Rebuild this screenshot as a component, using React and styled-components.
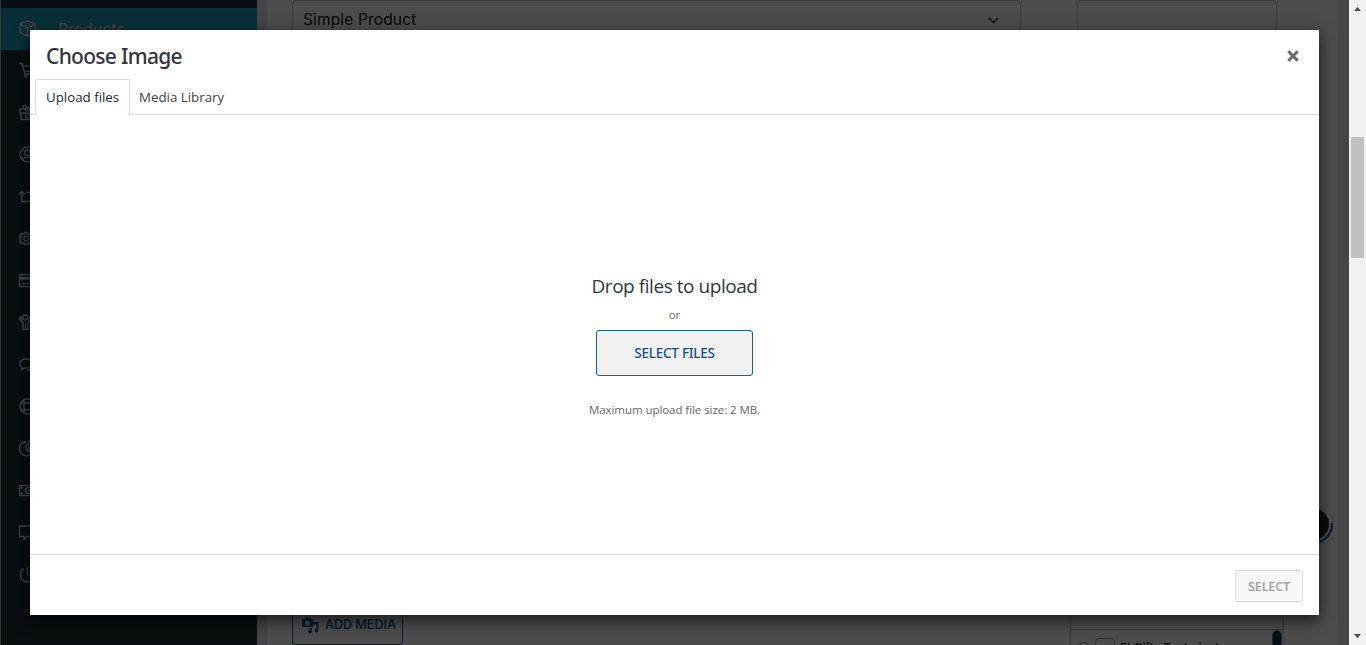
import React from "react";
import styled, { createGlobalStyle } from "styled-components";

const Global = createGlobalStyle`
  *, *::before, *::after { box-sizing: border-box; }
  html, body { margin: 0; padding: 0; overflow: hidden; }
  button { font: inherit; margin: 0; }
`;

const Screen = styled.div`
  display: flex;
  width: 1366px;
  height: 645px;
  overflow: hidden;
  font-family: "Open Sans", "Noto Sans", sans-serif;
`;
const Viewport = styled.div`
  position: relative;
  display: flex;
  width: 1349px;
  height: 645px;
  overflow: hidden;
  background: #e4e7ed;
`;

const Sidebar = styled.nav`
  width: 257px;
  height: 645px;
  padding-top: 8px;
  background: #1b2f39;
  border-left: 1px solid #b4b4b4;
`;
const NavItem = styled.div`
  display: flex;
  align-items: center;
  gap: 22px;
  height: 42px;
  padding-left: 18px;
  background: ${(p) => (p.$active ? "#1b9db7" : "transparent")};
  color: #e4e4e4;
  font: 400 16px/1 Inter, sans-serif;
  svg { width: 17px; height: 17px; flex: none; margin-bottom: 2px; }
`;
const NavLabel = styled.span`
  letter-spacing: -0.1px;
`;

const Content = styled.main`
  display: flex;
  flex-direction: column;
  justify-content: space-between;
  width: 1071px;
  height: 645px;
  margin-left: 10px;
  background: #fff;
`;
const FieldRow = styled.div`
  display: flex;
  gap: 56px;
  padding-left: 25px;
`;
const Field = styled.div`
  display: flex;
  align-items: center;
  justify-content: space-between;
  width: ${(p) => p.$width}px;
  height: 40px;
  padding: 0 21px 0 10px;
  border: 1px solid #c8c8c8;
  border-radius: 4px;
  color: #111;
  font: 400 15.5px/1 Inter, sans-serif;
  letter-spacing: 0.15px;
`;
const BottomRow = styled.div`
  display: flex;
  align-items: flex-end;
  justify-content: space-between;
  padding: 0 54px 0 25px;
`;
const MediaButton = styled.div`
  display: flex;
  align-items: center;
  gap: 6px;
  width: 111px;
  height: 40px;
  padding-left: 9px;
  border: 1px solid #1b65a0;
  border-radius: 3px;
  color: #1b65a0;
  font: 600 12.5px/1 Inter, sans-serif;
  white-space: nowrap;
`;
const CategoryBox = styled.div`
  width: 214px;
  height: 45px;
  border: solid #c0c0c0;
  border-width: 0 1px;
  padding-top: 29px;
`;
const CategoryRow = styled.div`
  display: flex;
  align-items: flex-start;
  height: 16px;
  padding: 0 1px 0 6px;
  overflow: hidden;
  border-top: 1px solid #c0c0c0;
  font: 500 12px/1 Inter, sans-serif;
  color: #222;
`;
const Expand = styled.span`
  width: 13px;
  height: 13px;
  margin: 12px 5px 0 0;
  border: 1px solid #1b9db7;
  border-radius: 50%;
`;
const Box = styled.span`
  width: 20px;
  height: 20px;
  margin: 8px 5px 0 0;
  border: 1px solid #aaa;
  border-radius: 4px;
`;
const CategoryName = styled.span`
  margin-top: 12px;
  white-space: nowrap;
`;
const Thumb = styled.span`
  width: 10px;
  height: 18px;
  margin-left: auto;
  background: #1b2f39;
  border: 1px solid #1b9db7;
  border-radius: 5px;
`;
const Bubble = styled.svg`
  position: absolute;
  left: 1294px;
  top: 504px;
  width: 42px;
  height: 42px;
`;

const Backdrop = styled.div`
  position: absolute;
  inset: 0;
  padding: 30px;
  background: rgba(0, 0, 0, 0.7);
`;
const Modal = styled.section`
  display: flex;
  flex-direction: column;
  width: 1289px;
  height: 585px;
  background: #fff;
  box-shadow: 0 5px 15px rgba(0, 0, 0, 0.7);
`;
const Header = styled.header`
  display: flex;
  align-items: center;
  justify-content: space-between;
  height: 49px;
  padding: 0 20px 0 16px;
  svg { margin-top: 3px; }
`;
const Title = styled.h1`
  margin: 3px 0 0;
  color: #32373c;
  font: 500 21px/30px "Noto Sans", sans-serif;
  letter-spacing: -0.7px;
`;
const Tabs = styled.div`
  display: flex;
  height: 36px;
  padding-left: 5px;
  border-bottom: 1px solid #ddd;
`;
const Tab = styled.div`
  width: ${(p) => p.$width}px;
  height: 36px;
  padding: 8px 0 0 ${(p) => (p.$active ? 10 : 9)}px;
  border: ${(p) => (p.$active ? "1px solid #ddd" : "1px solid transparent")};
  border-width: ${(p) => (p.$active ? "1px" : "1px 0 0")};
  border-bottom-color: ${(p) => (p.$active ? "#fff" : "transparent")};
  color: ${(p) => (p.$active ? "#23282d" : "#444")};
  font-size: 13.3px;
  line-height: 18px;
  white-space: nowrap;
`;
const DropArea = styled.div`
  display: flex;
  flex-direction: column;
  align-items: center;
  flex: 1;
  padding-top: 157px;
`;
const DropTitle = styled.h2`
  margin: 0;
  color: #32373c;
  font: 400 19px/28px "Open Sans", sans-serif;
  letter-spacing: -0.45px;
`;
const Small = styled.p`
  margin: ${(p) => p.$top}px 0 0;
  color: #666;
  font-size: 11.5px;
  line-height: 18px;
  letter-spacing: ${(p) => p.$track || 0}px;
`;
const Button = styled.button`
  width: ${(p) => (p.$large ? 157 : 68)}px;
  height: ${(p) => (p.$large ? 46 : 32)}px;
  margin-top: ${(p) => (p.$large ? 6 : 0)}px;
  padding: ${(p) => (p.$large ? 0 : "1px 0 0")};
  border: 1px solid ${(p) => (p.$large ? "#16609b" : "#ddd")};
  border-radius: 3px;
  background: ${(p) => (p.$large ? "#f1f1f1" : "#f7f7f7")};
  color: ${(p) => (p.$large ? "#16507f" : "#a0a5aa")};
  font: ${(p) => (p.$large ? "500 13.5px" : "600 12.5px")}/18px "Noto Sans", sans-serif;
  letter-spacing: ${(p) => p.$track}px;
`;
const Footer = styled.footer`
  display: flex;
  align-items: center;
  justify-content: flex-end;
  height: 61px;
  padding: 2px 16px 0 0;
  border-top: 1px solid #ddd;
`;

const Scrollbar = styled.div`
  display: flex;
  flex-direction: column;
  align-items: center;
  width: 17px;
  height: 645px;
  padding: 7px 0;
  background: #f1f1f1;
`;
const Handle = styled.div`
  width: 13px;
  height: 121px;
  margin: 126px 0 auto;
  background: #c1c1c1;
`;

const Line = ({ children }) => (
  <svg viewBox="0 0 17 17" fill="none" stroke="currentColor" strokeWidth="1.3">{children}</svg>
);

const icons = [
  <path key="i" d="M8.5 1 L16 4 V12.5 L8.5 16 L1 12.5 V4 Z M1 4 L8.5 7.5 L16 4 M8.5 7.5 V16" />,
  <path key="i" d="M0 1.5 H3 L6 12 H15 M4 4 H16 L14 9.5 H5.5 M8 14 a1 1 0 1 1-2 0 a1 1 0 1 1 2 0 M15 14 a1 1 0 1 1-2 0 a1 1 0 1 1 2 0" />,
  <path key="i" d="M1 5 H16 V9 H1 Z M2 9 V15.5 H15 V9 M7 5 V15.5 M10 5 V15.5 M8.5 5 C4 5 3 2 5 1.5 C7 1 8.5 5 8.5 5 C8.5 5 10 1 12 1.5 C14 2 13 5 8.5 5" />,
  <g key="i"><circle cx="8.5" cy="8.5" r="7.5" /><circle cx="8.5" cy="6.8" r="2.8" /><path d="M3.5 13.5 C5 10.5 12 10.5 13.5 13.5" /></g>,
  <path key="i" d="M0 6.5 L3 3.5 L6 6.5 M3 4 V13.5 H13 M7 4.5 H14 V13 M11 10.5 L14 13.5 L17 10.5" />,
  <g key="i"><circle cx="7" cy="8.5" r="2.3" /><path d="M5.5 2.5 H8.5 L9.1 4.4 L11.5 3.5 L13.3 6 L12 8.5 L13.3 11 L11.5 13.5 L9.1 12.6 L8.5 14.5 H5.5 L4.9 12.6 L2.5 13.5 L.7 11 L2 8.5 L.7 6 L2.5 3.5 L4.9 4.4 Z" /></g>,
  <path key="i" d="M.5 2.5 H16.5 V14.5 H.5 Z M.5 5.5 H16.5 M.5 7 H16.5 M3 11.5 H6 M7 11.5 H10" />,
  <g key="i"><circle cx="6.5" cy="3.5" r="2.5" /><path d="M4 6 L1.5 3 L.5 5 L4 8.5 V15.5 H9 V8.5 L12.5 5 L11.5 3 L9 6 M6.5 10 V15" /></g>,
  <path key="i" d="M3.5 12 C-1 9 .5 3 7 3 C14 3 15.5 9 11 11.5 C9 12.5 7 12.2 6 12 L2 14 Z M14.5 6 C18 8 17 12 15 13 L16 15 L12 14 L8 14" />,
  <g key="i"><circle cx="8.5" cy="8.5" r="7.5" /><circle cx="8.5" cy="8.5" r="3.7" /><path d="M2.5 4 L5.5 6.5 M4 2.5 L6.5 5.5 M13 2.5 L10.5 5.5 M14.5 4 L11.5 6.5 M2.5 13 L5.5 10.5 M4 14.5 L6.5 11.5 M13 14.5 L10.5 11.5 M14.5 13 L11.5 10.5" /></g>,
  <path key="i" d="M7 1.5 A7.2 7.2 0 1 0 12.5 14 L7 9 Z M9.5 1 V8 H16 A7 7 0 0 0 9.5 1 M10 10 L14 13.5 A7 7 0 0 0 16 10 Z" />,
  <g key="i"><path d="M.5 3.5 H18 V13.5 H.5 Z M2.5 7 V5.5 H4 M2.5 10 V11.5 H4" /><circle cx="9.5" cy="8.5" r="3.2" /><path d="M9.5 6.5 V10.5" /></g>,
  <path key="i" d="M.5 2 H17 V12.5 H8 L5 15.5 V12.5 H.5 Z" />,
  <path key="i" d="M5 2.5 A7.2 7.2 0 1 0 12 2.5 M8.5 1 V9" />,
];

export default function App() {
  return (
    <Screen>
      <Global />
      <Viewport>
        <Sidebar>
          {icons.map((icon, i) => (
            <NavItem key={i} $active={i === 0}>
              <Line>{icon}</Line>
              {i === 0 && <NavLabel>Products</NavLabel>}
            </NavItem>
          ))}
        </Sidebar>
        <Content>
          <FieldRow>
            <Field $width={729}>
              Simple Product
              <svg width="11" height="7" viewBox="0 0 11 7" fill="none" stroke="#111" strokeWidth="1.3"><path d="M1 1 L5.5 5.5 L10 1" /></svg>
            </Field>
            <Field $width={200} />
          </FieldRow>
          <BottomRow>
            <MediaButton>
              <svg width="17" height="17" viewBox="0 0 17 17" fill="currentColor">
                <path fillRule="evenodd" d="M0 2 H2.5 L4 0.5 H7 L8.5 2 H11 V10 H0 Z M5.5 3.5 a2.5 2.5 0 1 0 .01 0 Z" />
                <path d="M11 5 H16.5 V13 A2 2 0 1 1 14.5 11.5 V7.5 H11 Z M7.5 11 H10 V14.5 A2 2 0 1 1 7.5 12.7 Z" />
              </svg>
              ADD MEDIA
            </MediaButton>
            <CategoryBox>
              <CategoryRow>
                <Expand /><Box /><CategoryName>El Gifts Technical</CategoryName><Thumb />
              </CategoryRow>
            </CategoryBox>
          </BottomRow>
        </Content>
        <Bubble viewBox="0 0 42 42">
          <circle cx="19" cy="20" r="16" fill="#222" />
          <path d="M38 19 A19 19 0 0 1 19 39" fill="none" stroke="#1b50b0" strokeWidth="2" />
        </Bubble>
        <Backdrop>
          <Modal>
            <Header>
              <Title>Choose Image</Title>
              <svg width="12" height="12" viewBox="0 0 12 12" stroke="#666c72" strokeWidth="3"><path d="M1.3 1.3 L10.7 10.7 M10.7 1.3 L1.3 10.7" /></svg>
            </Header>
            <Tabs>
              <Tab $active $width={95}>Upload files</Tab>
              <Tab $width={105}>Media Library</Tab>
            </Tabs>
            <DropArea>
              <DropTitle>Drop files to upload</DropTitle>
              <Small $top={6}>or</Small>
              <Button $large $track={-0.25}>SELECT FILES</Button>
              <Small $top={25} $track={-0.06}>Maximum upload file size: 2 MB.</Small>
            </DropArea>
            <Footer>
              <Button $track={-0.15} disabled>SELECT</Button>
            </Footer>
          </Modal>
        </Backdrop>
      </Viewport>
      <Scrollbar>
        <svg width="7" height="4" viewBox="0 0 7 4" fill="#505050"><path d="M0 4 L3.5 0 L7 4 Z" /></svg>
        <Handle />
        <svg width="7" height="4" viewBox="0 0 7 4" fill="#505050"><path d="M0 0 L3.5 4 L7 0 Z" /></svg>
      </Scrollbar>
    </Screen>
  );
}
